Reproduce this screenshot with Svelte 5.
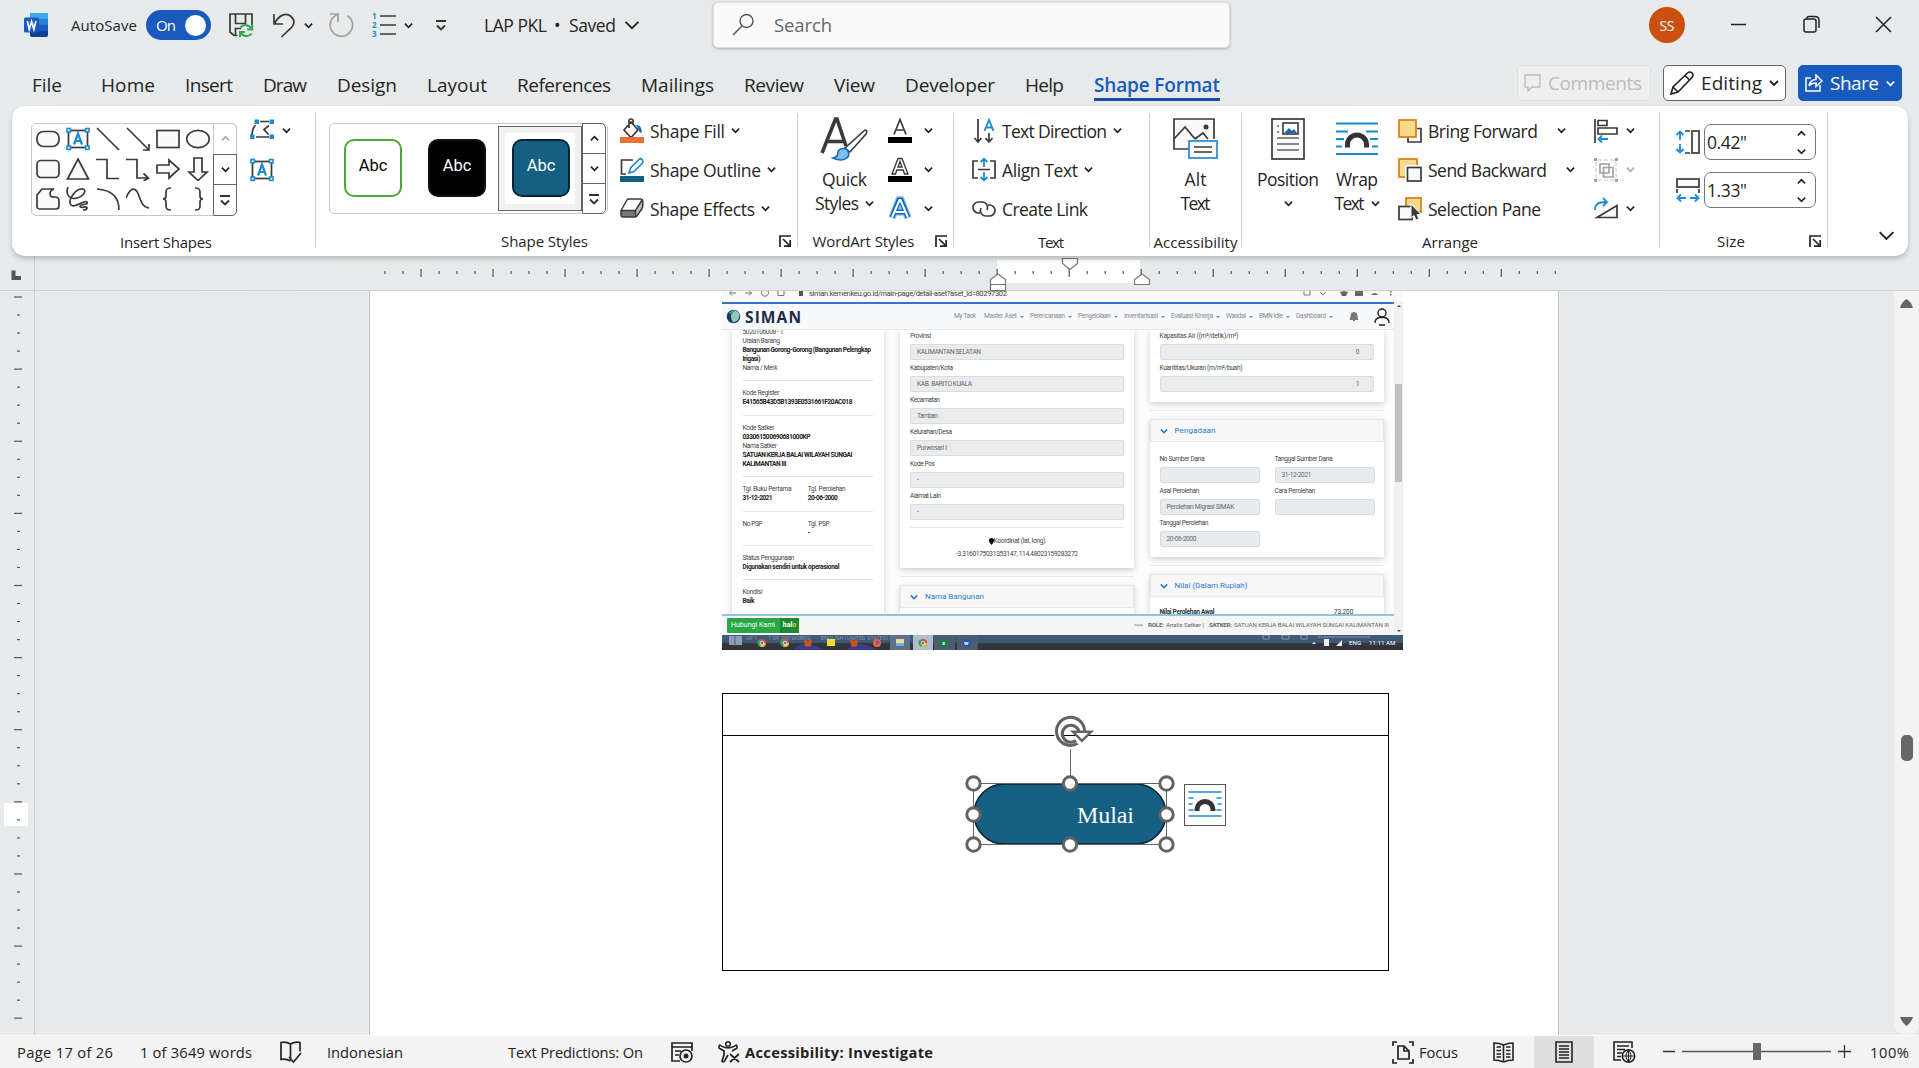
<script>
  // Sets letter spacing so that a label takes exactly its own column width.
  function fit(node, width) {
    const range = document.createRange();
    range.selectNodeContents(node);
    node.style.width = 'max-content';
    const natural = range.getBoundingClientRect().width;
    const gaps = Math.max(1, [...node.textContent].length - 1);
    node.style.letterSpacing = (width - natural) / gaps + 'px';
    node.style.width = width + 'px';
  }

  const D = 'stroke="#3b3a39" stroke-width="1.7" fill="none"';
  const G = 'stroke="#3b3a39" stroke-width="1.7" fill="#fafafa"';
  const B = 'stroke="#1e8bd0" stroke-width="1.8" fill="none"';
  const corner = (x, y) => `<rect x="${x}" y="${y}" width="3.4" height="3.4" fill="#fff" stroke="#1e8bd0" stroke-width="1.6"/>`;
  const boxA = `<rect x="2.5" y="3.5" width="19" height="17" ${D}/><path d="M8 17.500 12 6.500l4 11M9.300 14h5.400" stroke="#1e8bd0" stroke-width="2.200" fill="none"/>` + corner(1, 1.5) + corner(19.6, 1.5) + corner(1, 19) + corner(19.6, 19);

  const shapes = [
    `<rect x="1" y="4.500" width="22" height="15" rx="6.500" ${G}/>`,
    boxA,
    `<path d="M1 1 23 23" ${D}/>`,
    `<path d="M1 1 23 23M23 17v6h-6" ${D}/>`,
    `<rect x="1" y="3.500" width="22" height="17" ${G}/>`,
    `<ellipse cx="12" cy="12" rx="11.300" ry="8.700" ${G}/>`,
    `<rect x="1" y="3.500" width="22" height="17" rx="4" ${G}/>`,
    `<path d="M12 2 22.500 22h-21z" ${G}/>`,
    `<path d="M0 2.500h11v19h12" ${D}/>`,
    `<path d="M0 2.500h11v18.500h11M17.500 16.500l5 4.500-5 3" ${D}/>`,
    `<path d="M1 8h12V3l10 9-10 9v-5H1z" ${G}/>`,
    `<path d="M8 1h8v14h5l-9 8.500L3 15h5z" ${G}/>`,
    `<path d="M6 2h12c-3 1-4 3-4 5 0 3 2 3 5 3q4 0 4 4v5q0 3-3 3H4q-3 0-3-3V8z" ${G}/>`,
    `<path d="M2 0C-1 8 4 13 11 11S21 3 17 2C10 1 1 13 5 18c4 4 14-6 16-3 2 3-7 2-7 4.500C15 22 21 18 21 21q0 2-4 2" ${D}/>`,
    `<path d="M1 2c14 1 22 8 22 21" ${D}/>`,
    `<path d="M0 11C5-1 10 0 13 9s5 11 10 12" ${D}/>`,
    `<path d="M15 1c-4 0-5 1-5 4v4q0 3-3 3 3 0 3 3v4c0 3 1 4 5 4" ${D}/>`,
    `<path d="M9 1c4 0 5 1 5 4v4q0 3 3 3-3 0-3 3v4c0 3-1 4-5 4" ${D}/>`
  ];

  const icons = {
    word: '<rect x="6" width="18" height="24" rx="2" fill="#103f91"/><path d="M6 2q0-2 2-2h14q2 0 2 2v4H6z" fill="#41a5ee"/><path d="M6 6h18v6H6z" fill="#2b7cd3"/><path d="M6 12h18v6H6z" fill="#185abd"/><rect y="4.500" width="15" height="15" rx="1.500" fill="#185abd"/><path d="m3.300 8 2 8.200L7.600 8.500l2.300 7.700 2-8.200" fill="none" stroke="#fff" stroke-width="1.700"/>',
    save: `<path d="M8.500 22.500H5L1 19V1h22v11M6.500 1v9.500h10V1M6.500 22.500v-7H12" ${D}/><path d="M23.200 11.500v5h-5M11 24v-5h5M22.500 16a6.500 6.500 0 0 0-11-1.500M11.700 19.500a6.500 6.500 0 0 0 11 1" stroke="#2fa84f" stroke-width="2" fill="none"/>`,
    undo: `<path d="M2 1v10h9M2.500 10.500C7 2 14-1 19 3.500s3 9-1 12.500L9.500 24" ${D}/>`,
    redo: '<path d="M1 1.500h8v8M8.700 2a11.200 11.200 0 1 0 9.500 1" transform="translate(0 -.5)" stroke="#a2a2a2" stroke-width="1.700" fill="none"/>',
    list: `<path d="M8 3h16M8 12h16M8 21h16" ${D}/><g font-size="8" font-weight="700" fill="#1e8bd0"><text y="6">1</text><text y="15">2</text><text y="24">3</text></g>`,
    more: '<path d="M1 2h10" stroke="#333" stroke-width="2"/><path d="m2 6.500 4 4 4-4" stroke="#333" stroke-width="1.900" fill="none"/>',
    search: '<circle cx="14.500" cy="8" r="6.500" fill="none" stroke="#555" stroke-width="1.400"/><path d="m10 13-9 9" stroke="#555" stroke-width="1.400"/>',
    comment: '<path d="M1 2h15v12H8l-4 4v-4H1z" fill="none" stroke="#bdbdbd" stroke-width="1.400"/>',
    pencil: '<path d="M1 23l2-7L17.500 2q2.500-2 4.500 0t0 4.500L8 21zM15 4.500l4.500 4.500M3 16l5 5" fill="none" stroke="#222" stroke-width="1.600"/>',
    share: '<path d="M6 5H1v13h14v-6M4 13C5 8 8 6.500 11 6.500V2l6 6-6 5.500V10C8 10 6 10.500 4 13z" fill="none" stroke="#fff" stroke-width="1.500"/>',
    editShape: `<path d="M5.500 6Q2 10 2 16M10 2.500h9M19 6.500l-5 4 4.500 5M6 18h13" ${D}/><path d="M4.500.500H9V5H4.500zM19.500.500H24V5h-4.500zM0 15.500h4.500V20H0zM19.500 15.500H24V20h-4.500z" fill="#1e8bd0"/>`,
    boxA,
    fill: `<path d="M4 11 11 3l7 8-6 6.500q-1 .5-2 0zM9 9V2q0-2 2-2t2 2v3" ${G}/><path d="M16 6q5-1 6 7-3 2-3-2z" fill="#0f6cbd"/><rect y="18" width="24" height="6" fill="#eb7031"/>`,
    outline: `<path d="M13 2H1.500v14H6" ${D}/><path d="m9 15 1.500-5L19 1.500q1.500-1.500 3 0t.5 3.500L14 13.500z" fill="#fff" stroke="#1e8bd0" stroke-width="1.700"/><rect y="18" width="24" height="6" fill="#156082"/>`,
    effects: '<path d="M1 13.500h14.500l-1 6.500H3q-2 0-2-2z" fill="#777"/><path d="m15.500 13.500 6.500-11 1 8-6.500 9.500h-2z" fill="#bbb"/><path d="M1 13.500 7 3q.6-1 2-1h11q2 0 2 1l-6.500 10.500z" fill="#fff"/><path d="M1 13.500 7 3q.6-1 2-1h11.500q2 0 2.300 2v5q0 1-.8 2.500L17 19q-1 1-2 1H3q-2 0-2-2zh14.500L22 3M15.500 13.500V20" fill="none" stroke="#3b3a39" stroke-width="1.500"/>',
    quick: '<path d="M1 36 14.500 2h1.500l9 27M6 24.500h17" fill="none" stroke="#3b3a39" stroke-width="3.600"/><path d="M44 13q3 0 1 4L29 35l-5-4z" fill="#fff" stroke="#3b3a39" stroke-width="1.600"/><path d="M12 41q5-1 5-6c1-4 8-5 10-1 3 6-4 12-15 7z" fill="#83bdf0" stroke="#0f6cbd" stroke-width="1.600"/>',
    textFill: `<path d="m6 15.500 6-15 6 15M8 11h8" ${D}/><rect y="18" width="24" height="6"/>`,
    textOutline: '<path d="m4 16 6-15.500h4L20 16h-3.500l-1.300-4H8.800l-1.300 4zM10 9h4l-2-5.500z" fill="#fff" stroke="#3b3a39" stroke-width="1.400"/><rect y="18" width="24" height="6"/>',
    textEffect: '<path d="M4 21 11 3h2l7 18M7.500 15h9" fill="none" stroke="#90c5f2" stroke-width="7.500"/><path d="M4 20.500 11 3h2l7 17.500M7.500 15h9" fill="none" stroke="#0f6cbd" stroke-width="5"/><path d="M4 20.500 11.500 3h1L20 20.500M7.500 15h9" fill="none" stroke="#fff" stroke-width="2"/>',
    textDir: `<path d="M6 0v22M2.500 19 6 23l3.500-4M17 14v9M13.500 19l3.500 4 3.500-4" ${D}/><path d="m12.500 12 4.500-11 4.500 11M14 8.500h6" ${B}/>`,
    alignText: `<path d="M6 3H1v17h5M18 3h5v17h-5M6 11.500h12" ${D}/><path d="M12 9V1M8.500 4 12 .8 15.500 4M12 14v8M8.500 19l3.500 3.300 3.500-3.300" ${B}/>`,
    link: `<path d="M8 16H6.500a5.500 5.500 0 1 1 0-11H10a5.500 5.500 0 0 1 5 8M16 8h1.500a5.500 5.500 0 1 1 0 11H14a5.500 5.500 0 0 1-5-8" ${D}/>`,
    alt: `<path d="M22 31H1V1h40v20" ${G}/><path d="m1 21 11-12 10 12M22 21l8-6 5 6" ${D}/><circle cx="33" cy="9" r="2.500" fill="#3b3a39"/><rect x="16" y="23" width="28" height="17" fill="#fafafa" stroke="#1e8bd0" stroke-width="1.700"/><path d="M21 29h18M21 34h18" ${D}/>`,
    position: `<rect x="1" y="1" width="32" height="40" ${G}/><path d="M6 8h2M6 14h2M6 20h22M6 26h22M6 32h22" stroke="#666" stroke-width="1.700"/><rect x="12" y="5" width="15" height="11" fill="#fff" stroke="#3b3a39" stroke-width="1.600"/><path d="m13 15 5-5 3 3 2-2 3 4z" fill="#0f6cbd"/>`,
    wrap: `<path d="M0 1h42M0 9h12M30 9h12M0 16.500h8M34 16.500h8M0 24h6M36 24h6M0 31.500h42" ${B}/><path d="M11.500 25v-3a9.500 9.500 0 0 1 19 0v3" fill="none" stroke="#333" stroke-width="5"/>`,
    forward: `<path d="M19 9.500h4V23H10v-4" ${D}/><rect x="1" y="1" width="17" height="17" fill="#f8da8d" stroke="#e07a10" stroke-width="1.700"/>`,
    backward: `<rect x="1" y="1" width="18" height="18" fill="#f8da8d" stroke="#e07a10" stroke-width="1.700"/><rect x="7" y="7" width="17" height="17" fill="#fff"/><rect x="9.500" y="9.500" width="13.500" height="13.500" ${G}/>`,
    pane: `<rect x="8" y="1" width="15" height="14" fill="#f8da8d" stroke="#e07a10" stroke-width="1.700"/><rect x="1" y="9.500" width="13" height="13" ${G}/><path d="M13 7v14l3-2.500 2 4.500 3-1-2-4.500h4z" fill="#3b3a39" stroke="#fff"/>`,
    align: `<path d="M1 0v24M4 1.500h9v5H4zM4 9h19v6H4z" ${D}/><path d="M14 20H4.500M8 16.500 4.500 20 8 23.500" ${B}/>`,
    group: '<path d="M4 2h16M4 22h16M2 4v16M22 4v16" stroke="#c2c2c2" stroke-dasharray="4 2"/><path d="M0 0h3v3H0zM21 0h3v3h-3zM0 21h3v3H0zM21 21h3v3h-3z" fill="#a2a2a2"/><path d="M6 6h9v9H6zM9.500 9.500H19V19H9.500z" stroke="#a2a2a2" stroke-width="1.700" fill="none"/>',
    rotate: `<path d="M3 20.500h20v-12z" ${G}/><path d="M1 13C1 7 4 5 12 5M9 1l4 4-4 4" ${B}/>`,
    height: `<path d="M9 1h5M9 23h5" ${D}/><rect x="16" y="1" width="7" height="22" ${G}/><path d="M4 10V1.500M.5 5 4 1.500 7.500 5M4 14v8.500M.5 19 4 22.500 7.500 19" ${B}/>`,
    width: `<rect x="1" y="1" width="22" height="8" ${G}/><path d="M1 11v4M23 11v4" ${D}/><path d="M10 20H1.500M5 16.500 1.500 20 5 23.500M14 20h8.500M19 16.500l3.500 3.500-3.500 3.500" ${B}/>`,
    launcher: '<path d="M1 12V1h11M4 4l6 6M11.200 5v6.200H5" stroke="#222" stroke-width="1.700" fill="none"/>',
    book: '<path d="M10.500 3v15M10.500 3Q6 .5 1 1.500v17q5-1 9.500 1.500M10.500 3Q15 .5 20 1.500v9M9 16l4.500 5L21 12" fill="none" stroke="#222" stroke-width="1.700"/>',
    macro: '<path d="M21 9V1H1v18h8M1 5h20M4 9h6M4 13h4" fill="none" stroke="#222" stroke-width="1.700"/><circle cx="15" cy="14" r="6" fill="#f3f3f3" stroke="#222" stroke-width="1.700"/><circle cx="15" cy="14" r="2.500" fill="#222"/>',
    access: '<circle cx="10" cy="3" r="2.300" fill="none" stroke="#222" stroke-width="1.500"/><path d="M10 7Q4 6 2.500 4.500T1 7l5 3v4l-2 6q1 2 2.500 0L10 14M10 7q6-1 7.500-2.500T19 7l-5 3M12 13l9 8M21 13l-9 8" fill="none" stroke="#222" stroke-width="1.700"/>',
    focus: '<path d="M5 1H1v4M17 1h4v4M5 22H1v-4M17 22h4v-4M6 5h6l5 5v8H6zM12 5v5h5" fill="none" stroke="#222" stroke-width="1.700"/>',
    read: '<path d="M10.500 3v16M10.500 3Q6 1 1 1v17q5 0 9.500 2M10.500 3Q15 1 20 1v17q-5 0-9.500 2M3.500 5H8M3.500 8.500H8M3.500 12H8M3.500 15H8M13 5h4.500M13 8.500h4.500M13 12h4.500M13 15h4.500" fill="none" stroke="#222" stroke-width="1.600"/>',
    print: '<path d="M1 1h16v20H1zM4 5h10M4 8h10M4 11h10M4 14h10M4 17h10" fill="none" stroke="#222" stroke-width="1.600"/>',
    web: '<path d="M19 7V1H1v18h7M4 5h12M4 8.500h8M4 12h5M4 15.500h4" fill="none" stroke="#222" stroke-width="1.600"/><circle cx="15.500" cy="15" r="6.200" fill="#f3f3f3" stroke="#222" stroke-width="1.500"/><path d="M9.500 15h12M15.500 9v12M15.500 9q-5 6 0 12M15.500 9q5 6 0 12" fill="none" stroke="#222"/>',
    bell: '<path d="M1 8.500Q2 7 2 4.500a3 3 0 0 1 6 0Q8 7 9 8.500zM4 9.500h2" fill="#777" stroke="#777"/>',
    user: '<circle cx="8" cy="5" r="4" fill="none" stroke="#222" stroke-width="1.400"/><path d="M1 15q0-5 5-5.500h4q5 .5 5 5.500M5 17h6" fill="none" stroke="#222" stroke-width="1.400"/>'
  };

  const tabs = [['File', 30], ['Home', 54], ['Insert', 48], ['Draw', 44], ['Design', 60], ['Layout', 60], ['References', 94], ['Mailings', 73], ['Review', 60], ['View', 41], ['Developer', 90], ['Help', 39], ['Shape Format', 126]];
  const hTicks = Array.from({ length: 66 }, (_, i) => ({ x: 385 + 18.005 * i, major: i % 4 === 2 }));
  const vTicks = Array.from({ length: 41 }, (_, i) => ({ y: 6 + 18.03 * i, major: i % 4 === 0 }));

  const asset = [
    [['5020106008 - 1', 41], ['Uraian Barang', 37.5], ['Bangunan Gorong-Gorong (Bangunan Pelengkap', 128.5, 1], ['Irigasi)', 18, 1], ['Nama / Merk', 35]],
    [['Kode Register', 37], ['E41565B43D5B1393E0531661F20AC018', 110, 1]],
    [['Kode Satker', 32], ['033061500690681000KP', 68, 1], ['Nama Satker', 34.5], ['SATUAN KERJA BALAI WILAYAH SUNGAI', 110, 1], ['KALIMANTAN III', 44, 1]]
  ];
  const pairs = [
    [['Tgl. Buku Pertama', 49, '31-12-2021', 30], ['Tgl. Perolehan', 38, '20-06-2000', 30]],
    [['No PSP', 20, '', 0], ['Tgl. PSP', 22, '-', 2]]
  ];
  const places = [['Provinsi', 21, 'KALIMANTAN SELATAN', 64], ['Kabupaten/Kota', 43, 'KAB. BARITO KUALA', 55], ['Kecamatan', 30, 'Tamban', 21], ['Kelurahan/Desa', 42, 'Purwosari I', 30], ['Kode Pos', 25, '-', 2], ['Alamat Lain', 31, '-', 2]];
  const menus = [['My Task', 22], ['Master Aset', 33], ['Perencanaan', 35], ['Pengelolaan', 33], ['Inventarisasi', 34], ['Evaluasi Kinerja', 42], ['Wasdal', 20], ['BMN Idle', 24], ['Dashboard', 30]];
  const handles = [[0, 0], [96.5, 0], [193, 0], [0, 31], [193, 31], [0, 61], [96.5, 61], [193, 61]];
</script>

{#snippet t(text, w)}<span class="fit" use:fit={w}>{text}</span>{/snippet}
{#snippet ic(name, w, h)}<svg class="ic" width={w} height={h} viewBox="0 0 {w} {h}">{@html icons[name]}</svg>{/snippet}
{#snippet chev(w = 9, up = false, color = '#222')}<svg class="ic" width={w} height={w} viewBox="0 0 10 10"><path d={up ? 'm1 7 4-4 4 4' : 'm1 3 4 4 4-4'} fill="none" stroke={color} stroke-width={w > 12 ? 1.1 : 1.9} /></svg>{/snippet}
{#snippet cmd(name, label, w, arrow = true)}
  <div class="cmd">{@render ic(name, 24, 24)}{@render t(label, w)}{#if arrow}{@render chev()}{/if}</div>
{/snippet}
{#snippet field(label, w, value, vw)}
  <div class="field"><div class="lab">{@render t(label, w)}</div><div class="inp">{#if value}{@render t(value, vw)}{/if}</div></div>
{/snippet}

<div class="app">
  <header class="title">
    {@render ic('word', 24, 24)}
    <div class="autosave">{@render t('AutoSave', 66)}</div>
    <div class="toggle">{@render t('On', 20)}<i></i></div>
    <div class="m18">{@render ic('save', 25, 25)}</div>
    <div class="m18">{@render ic('undo', 24, 25)}</div>
    <div class="m8">{@render chev()}</div>
    <div class="m15">{@render ic('redo', 25, 25)}</div>
    <div class="m18">{@render ic('list', 24, 25)}</div>
    <div class="m8">{@render chev()}</div>
    <div class="m22">{@render ic('more', 12, 12)}</div>
    <div class="docname">{@render t('LAP PKL', 63)}{@render t('•', 8)}{@render t('Saved', 47)}</div>
    <div class="m8">{@render chev(16)}</div>
    <div class="search">{@render ic('search', 22, 23)}{@render t('Search', 58)}</div>
    <div class="avatar">{@render t('SS', 15)}</div>
    <svg class="win" width="162" height="20" viewBox="0 0 162 20"><path d="M0 9.500h15M145 2l15 15M160 2l-15 15" stroke="#222" stroke-width="1.500" /><path d="M73 6q0-2 2-2h8q2 0 2 2v9q0 2-2 2h-8q-2 0-2-2zM76 3.500q0-2 2-2h6q4 0 4 4V13" fill="none" stroke="#222" stroke-width="1.500" /></svg>
  </header>

  <nav class="tabs">
    {#each tabs as [label, w], i}
      <div class="tab" class:first={i === 0} class:active={i === 12}>{@render t(label, w)}</div>
    {/each}
    <div class="actions">
      <div class="btn comments">{@render ic('comment', 17, 20)}{@render t('Comments', 94)}</div>
      <div class="btn editing">{@render ic('pencil', 24, 24)}{@render t('Editing', 61)}{@render chev(10)}</div>
      <div class="btn share">{@render ic('share', 18, 20)}{@render t('Share', 49)}{@render chev(9, false, '#fff')}</div>
    </div>
  </nav>

  <section class="ribbon">
    <div class="group g1">
      <div class="body">
        <div class="gallery shapes">
          <div class="shapegrid">{#each shapes as s}<svg width="24" height="24" viewBox="0 0 24 24">{@html s}</svg>{/each}</div>
          <div class="spin"><b class="off">{@render chev(9, true, '#aaa')}</b><b>{@render chev()}</b><b>{@render ic('more', 12, 12)}</b></div>
        </div>
        <div class="col editcol">
          <div class="cmd">{@render ic('editShape', 24, 24)}{@render chev()}</div>
          <div class="cmd">{@render ic('boxA', 24, 24)}</div>
        </div>
      </div>
      <div class="glabel">{@render t('Insert Shapes', 92)}</div>
    </div>
    <div class="sep"></div>
    <div class="group g2">
      <div class="body">
        <div class="gallery styles">
          <div class="cell"><div class="abc green">Abc</div></div>
          <div class="cell"><div class="abc black">Abc</div></div>
          <div class="cell sel"><div class="abc teal">Abc</div></div>
          <div class="spin"><b>{@render chev(9, true)}</b><b>{@render chev()}</b><b>{@render ic('more', 12, 12)}</b></div>
        </div>
        <div class="col fillcol">
          {@render cmd('fill', 'Shape Fill', 75)}
          {@render cmd('outline', 'Shape Outline', 111)}
          {@render cmd('effects', 'Shape Effects', 105)}
        </div>
      </div>
      <div class="glabel">{@render t('Shape Styles', 87)}<span class="launch">{@render ic('launcher', 13, 13)}</span></div>
    </div>
    <div class="sep"></div>
    <div class="group g3">
      <div class="body">
        <div class="big quick">{@render ic('quick', 47, 44)}<div>{@render t('Quick', 45)}</div><div>{@render t('Styles', 44)}{@render chev()}</div></div>
        <div class="col acol">
          {#each ['textFill', 'textOutline', 'textEffect'] as n}<div class="cmd">{@render ic(n, 24, 24)}{@render chev()}</div>{/each}
        </div>
      </div>
      <div class="glabel">{@render t('WordArt Styles', 102)}<span class="launch">{@render ic('launcher', 13, 13)}</span></div>
    </div>
    <div class="sep"></div>
    <div class="group g4">
      <div class="body">
        <div class="col">
          {@render cmd('textDir', 'Text Direction', 105)}
          {@render cmd('alignText', 'Align Text', 76)}
          {@render cmd('link', 'Create Link', 86, false)}
        </div>
      </div>
      <div class="glabel low">{@render t('Text', 26)}</div>
    </div>
    <div class="sep"></div>
    <div class="group g5">
      <div class="body"><div class="big alt">{@render ic('alt', 45, 42)}<div>{@render t('Alt', 22)}</div><div>{@render t('Text', 30)}</div></div></div>
      <div class="glabel low">{@render t('Accessibility', 84)}</div>
    </div>
    <div class="sep"></div>
    <div class="group g6">
      <div class="body">
        <div class="big pos">{@render ic('position', 34, 42)}<div>{@render t('Position', 62)}</div><div>{@render chev()}</div></div>
        <div class="big wrapb">{@render ic('wrap', 42, 33)}<div>{@render t('Wrap', 42)}</div><div>{@render t('Text', 30)}{@render chev()}</div></div>
        <div class="col far">
          {@render cmd('forward', 'Bring Forward', 110)}
          {@render cmd('backward', 'Send Backward', 119)}
          {@render cmd('pane', 'Selection Pane', 113, false)}
        </div>
        <div class="col acol2">
          <div class="cmd">{@render ic('align', 24, 24)}{@render chev()}</div>
          <div class="cmd">{@render ic('group', 24, 24)}{@render chev(9, false, '#aaa')}</div>
          <div class="cmd">{@render ic('rotate', 24, 24)}{@render chev()}</div>
        </div>
      </div>
      <div class="glabel low">{@render t('Arrange', 56)}</div>
    </div>
    <div class="sep"></div>
    <div class="group g7">
      <div class="body sizes">
        {#each [['height', '0.42"'], ['width', '1.33"']] as [n, v]}
          <div class="size">{@render ic(n, 24, 24)}<div class="num">{@render t(v, 40)}<span class="ud">{@render chev(9, true)}{@render chev()}</span></div></div>
        {/each}
      </div>
      <div class="glabel">{@render t('Size', 28)}<span class="launch">{@render ic('launcher', 13, 13)}</span></div>
    </div>
    <div class="sep"></div>
    <div class="collapse">{@render chev(17)}</div>
  </section>

  <div class="hruler">
    <svg width="1919" height="34" viewBox="0 257 1919 34">
      <path d="M11.500 270.500h4v5.500h5.500v4H11.500z" fill="#555" />
      <path d="M34.500 257v34" stroke="#ccd0d2" />
      <rect x="997" y="260" width="143" height="23" fill="#fff" />
      {#each hTicks as k}<path d="M{k.x} {k.major ? 269 : 271}v{k.major ? 8 : 3}" stroke="#555" stroke-width="1.200" />{/each}
      <path d="M1062.500 258.500h15v5l-7.500 6-7.500-6zM990.500 284.500v-5l7.500-5.500 7.500 5.500v5zM990.500 284.500h15v6h-15zM1134.500 284.500v-5l7.500-5.500 7.500 5.500v5z" fill="#fff" stroke="#777" stroke-width="1.200" />
    </svg>
  </div>

  <main class="work">
    <div class="vruler">
      <svg width="34" height="744">
        <rect x="4" y="512" width="24" height="23" fill="#fff" />
        {#each vTicks as k}<path d="M{k.major ? 14 : 17} {k.y}h{k.major ? 8 : 3}" stroke="#555" stroke-width="1.200" />{/each}
      </svg>
    </div>
    <div class="page">
      <div class="shot">
        <div class="chrome">
          <svg width="68" height="11"><g fill="none" stroke="#777"><path d="M14 2H8m2-2.500L7.500 2 10 4.500M23 2h7m-3-2.500L29.500 2 27 4.500M46 0a3.500 3.500 0 1 1-6 0M56 0v4.500h6V0" /></g></svg>
          <i class="lock"></i>{@render t('siman.kemenkeu.go.id/main-page/detail-aset?aset_id=80297302', 198)}
          <svg class="exts" width="100" height="8"><g fill="#666"><path d="m37 1 4-1 4 1-2 4h-4zM52 0h8v5h-8zM68 4q4-4 7 0zM87 0h1.500v1.500H87zM87 3h1.500v1.500H87z" /><path d="M1 0v4h6V0M17 1l3 3 3-3" fill="none" stroke="#777" /></g></svg>
        </div>
        <div class="site">
          <div class="view">
            <div class="nav">
              <svg class="ic" width="15" height="15" viewBox="0 0 15 15"><circle cx="7.500" cy="7.500" r="6.800" fill="#17336b" /><path d="M9 1.500q-7 4-2 12Q14 12 13.500 5 12 2 9 1.500z" fill="#8fc9b0" /><path d="M4 5q4-2 5-4-4 0-6 3z" fill="#3bb27a" /></svg>
              <div class="brand">{@render t('SIMAN', 56)}</div>
              <div class="menus">{#each menus as [m, w], i}<span>{@render t(m, w)}{#if i}<em></em>{/if}</span>{/each}</div>
              {@render ic('bell', 10, 11)}
              <div class="user">{@render ic('user', 16, 18)}</div><em class="blue"></em>
            </div>
            <div class="cols">
              <div class="card left">
                {#each asset as g}<div class="lines">{#each g as [s, w, b]}<div class:bold={b}>{@render t(s, w)}</div>{/each}</div>{/each}
                {#each pairs as p}<div class="lines two">{#each p as [a, w, v, vw]}<div><div>{@render t(a, w)}</div><div class="bold">{#if v}{@render t(v, vw)}{/if}</div></div>{/each}</div>{/each}
                <div class="lines"><div>{@render t('Status Penggunaan', 52)}</div><div class="bold">{@render t('Digunakan sendiri untuk operasional', 97)}</div></div>
                <div class="lines"><div>{@render t('Kondisi', 20)}</div><div class="bold">{@render t('Baik', 12)}</div></div>
              </div>
              <div class="mid">
                <div class="card form tall">
                  {#each places as [label, w, value, vw]}{@render field(label, w, value, vw)}{/each}
                  <div class="coord"><div><svg width="5" height="7"><path d="M2.500 7Q0 4 0 2.500a2.500 2.500 0 0 1 5 0Q5 4 2.500 7z" /></svg>{@render t('Koordinat (lat, long)', 52)}</div><div>{@render t('-3.3160175031353147, 114.48023159283272', 122)}</div></div>
                </div>
                <hr />
                <div class="card low"><div class="head">{@render chev(8, false, '#2a7ad0')}{@render t('Nama Bangunan', 59)}</div></div>
              </div>
              <div class="mid">
                <div class="card form short">
                  <div class="field num2"><div class="lab">{@render t('Kapasitas Air ((m³/detik)/m²)', 79)}</div><div class="inp">0</div></div>
                  <div class="field num2"><div class="lab">{@render t('Kuantitas/Ukuran (m/m²/buah)', 83)}</div><div class="inp">1</div></div>
                </div>
                <hr />
                <div class="card proc"><div class="head">{@render chev(8, false, '#2a7ad0')}{@render t('Pengadaan', 41)}</div>
                  <div class="grid2">
                    {@render field('No Sumber Dana', 45, '', 0)}{@render field('Tanggal Sumber Dana', 58, '31-12-2021', 30)}
                    {@render field('Asal Perolehan', 40, 'Perolehan Migrasi SIMAK', 68)}{@render field('Cara Perolehan', 41, '', 0)}
                    {@render field('Tanggal Perolehan', 49, '20-06-2000', 30)}
                  </div>
                </div>
                <hr />
                <div class="card low"><div class="head">{@render chev(8, false, '#2a7ad0')}{@render t('Nilai (Dalam Rupiah)', 73)}</div>
                  <div class="value"><b>{@render t('Nilai Perolehan Awal', 55)}</b><span>73,200</span></div></div>
              </div>
            </div>
            <div class="foot">
              <div class="call">{@render t('Hubungi Kami', 44)}<span>hal<u>o</u></span></div>
              <div class="role">{@render t('>>>', 9)}<b>{@render t('ROLE:', 16)}</b>{@render t('Analis Satker |', 38)}<b>{@render t('SATKER:', 23)}</b>{@render t('SATUAN KERJA BALAI WILAYAH SUNGAI KALIMANTAN III', 155)}</div>
            </div>
          </div>
          <div class="sbar"><em class="up"></em><i></i><em></em></div>
        </div>
        <div class="taskbar">
          <svg width="681" height="15" viewBox="0 0 681 15">
            <defs><linearGradient id="tb" x2="0" y2="1"><stop offset="0" stop-color="#3f5b7d" /><stop offset=".5" stop-color="#3f5672" /><stop offset=".55" stop-color="#33373f" /><stop offset="1" stop-color="#303136" /></linearGradient></defs>
            <rect width="681" height="15" fill="url(#tb)" />
            <path d="M73 13q10-10 28 2H73zM125 15q10-12 30 0z" fill="#3a3c8e" />
            <path d="M7 1h13v9H7z" fill="#8b9db2" /><path d="M13 1v10" stroke="#4b6078" />
            <g font-size="5.500" fill="#8797ab" font-family="Roboto"><text x="24" y="4.500">OF 1</text><text x="46" y="4.500">1 OF 300 WORDS</text><text x="99" y="4.500">ENGLISH (UNITED STATES)</text></g>
            <path d="M168 0h20v15h-20z" fill="#5d728a" /><path d="M191 0h20v15h-20z" fill="#aebdcc" /><path d="M212 0h21v15h-21zM235 0h21v15h-21z" fill="#4d5d71" />
            {#each [40, 63, 201] as x}<circle cx={x} cy="8" r="4" fill="#e04a36" /><path d="M{x} 8h4a4 4 0 0 1-6 3.500z" fill="#f6c42c" /><path d="M{x} 8l-2 3.500a4 4 0 0 1-1-7z" fill="#35a853" /><circle cx={x} cy="8" r="1.800" fill="#3a7de8" stroke="#fff" stroke-width=".7" />{/each}
            <path d="m82 4 4 2 4-2-1 7-3 1-3-1zM128 4l4 2 4-2-1 7-3 1-3-1z" fill="#c8541b" /><path d="M105 4h8v7h-8z" fill="#f2dc2e" /><circle cx="155" cy="8" r="4" fill="#f36b22" /><circle cx="155.500" cy="7.500" r="2" fill="#7652c8" />
            <path d="M174 4h8v7h-8z" fill="#eedb96" /><path d="M174 8h8v3h-8z" fill="#6eb3dd" /><path d="M218 4h8v8h-8z" fill="#1d7a48" /><path d="M241 4h8v8h-8z" fill="#285aa8" />
            <g font-size="6" fill="#fff" font-weight="700" font-family="Roboto"><text x="220" y="10">x</text><text x="242" y="10">w</text></g>
            <path d="M541 0h6v4h-6zM560 0h7v4h-7zM579 0h6v4h-6zM596 2h52" fill="none" stroke="#8797ab" />
            <path d="m590 9 2-2 2 2zM602 4h5v7h-5zM614 11l6-6v6z" fill="#eee" />
            <g font-size="6.200" fill="#fff" font-family="Roboto"><text x="627" y="10.300">ENG</text><text x="647" y="10.300">11:11 AM</text></g>
          </svg>
        </div>
      </div>

      <div class="table"><div class="trow"></div></div>

      <svg class="shape" width="270" height="145" viewBox="960 710 270 145">
        <rect x="974" y="784" width="192" height="60" rx="30" fill="#156082" stroke="#042433" stroke-width="1.600" />
        <rect x="973.500" y="783.500" width="193" height="61" fill="none" stroke="#666" />
        <path d="M1070.500 745v40" stroke="#666" />
        <text x="1077" y="823" font-size="24" textLength="57" fill="#fff">Mulai</text>
        {#each handles as [x, y]}<circle cx={973.5 + x} cy={783.5 + y} r="6.700" fill="#fff" stroke="#636363" stroke-width="3" />{/each}
        <g fill="none" stroke="#636363">
          <circle cx="1070.500" cy="732.500" r="12.500" stroke="#fff" stroke-width="8" />
          <path d="M1077.500 743.500A14 14 0 1 1 1084.500 731.500" stroke-width="3" />
          <path d="M1076 740.500A8.500 8.500 0 1 1 1079 731.500" stroke-width="3" />
          <path d="M1073 731.800h18l-9 9z" fill="#fff" stroke-width="2.500" />
        </g>
        <rect x="1184.500" y="784.500" width="41" height="41" fill="#fff" stroke="#555" />
        <path d="M1188.500 792h33M1188.500 798h5M1216.500 798h5M1188.500 804h4M1217.500 804h4M1188.500 810h5M1216.500 810h5M1188.500 816h33" stroke="#1e8bd0" stroke-width="1.700" />
        <path d="M1197 811v-1.500a8 8 0 0 1 16 0v1.500" fill="none" stroke="#333" stroke-width="5" />
      </svg>
    </div>
    <div class="vscroll"><svg width="25" height="744"><path d="M6 17q1.500-6 6.500-9 5 3 6.500 9zM6 726h13q-1.500 5-6.500 9-5-4-6.500-9z" fill="#666" /><rect x="7" y="444" width="12" height="26" rx="5" fill="#666" /></svg></div>
  </main>

  <footer class="status">
    <div class="s1">{@render t('Page 17 of 26', 96)}</div>
    <div class="s2">{@render t('1 of 3649 words', 112)}</div>
    <div class="s3">{@render ic('book', 22, 22)}</div>
    <div class="s4">{@render t('Indonesian', 76)}</div>
    <div class="s5">{@render t('Text Predictions: On', 135)}</div>
    <div class="s6">{@render ic('macro', 22, 21)}</div>
    <div class="s7">{@render ic('access', 22, 22)}</div>
    <strong>{@render t('Accessibility: Investigate', 188)}</strong>
    <div class="right">
      {@render ic('focus', 22, 23)}<div class="v0">{@render t('Focus', 39)}</div>
      <div class="v1">{@render ic('read', 21, 21)}</div>
      <div class="v2">{@render ic('print', 18, 22)}</div>
      <div class="v3">{@render ic('web', 22, 22)}</div>
      <svg width="190" height="20"><path d="M1 9.500h12M176 9.500h13M182.500 3v13" stroke="#333" stroke-width="1.300" /><path d="M20 9.500h149" stroke="#555" stroke-width="1.600" /><rect x="91" y="1" width="8" height="17" fill="#666" /></svg>
      <div class="zoom">{@render t('100%', 39)}</div>
    </div>
  </footer>
</div>

<style>
  :global(body) { margin: 0; overflow: hidden; }
  .app, .app :global(*) { box-sizing: border-box; }
  .app { width: 1919px; height: 1068px; display: flex; flex-direction: column; background: linear-gradient(100deg, #e6ebed 0%, #e8eaeb 15%, #e6eaea 50%, #e8ebec 70%, #e6eaec 100%); font-family: "Open Sans", "Noto Sans", sans-serif; color: #252525; font-size: 18px; }
  .fit { display: block; white-space: nowrap; flex: none; }
  .ic { display: block; flex: none; overflow: visible; }
  i, em { display: block; flex: none; }
  .title { height: 50px; display: flex; align-items: center; padding-left: 24px; flex: none; font-size: 17.500px; }
  .autosave { margin-left: 23px; font-size: 15px; }
  .toggle { margin-left: 9px; width: 65px; height: 30px; border-radius: 15px; background: #185abd; color: #fff; display: flex; align-items: center; justify-content: space-between; padding: 0 5px 0 10px; font-size: 15px; }
  .toggle i { width: 21px; height: 21px; border-radius: 50%; background: #fff; }
  .m18 { margin-left: 18px; } .m8 { margin-left: 8px; } .m15 { margin-left: 16px; } .m22 { margin-left: 22px; }
  .docname { margin-left: 37px; display: flex; justify-content: space-between; width: 132px; }
  .search { margin: -1px 0 0 73px; width: 517px; height: 46px; background: #fafafa; border-radius: 5px; border: 1px solid #dcdcdc; box-shadow: 0 1px 3px #0004; display: flex; align-items: center; gap: 20px; padding-left: 18px; color: #666; font-size: 18.500px; }
  .avatar { margin-left: 419px; width: 36px; height: 36px; border-radius: 50%; background: #ca5010; color: #fff; font-size: 14px; display: flex; align-items: center; justify-content: center; }
  .win { margin-left: 46px; }
  .tabs { height: 56px; flex: none; display: flex; gap: 30px; padding: 14px 17px 0 32px; font-size: 19px; }
  .tab { height: 37px; padding-top: 8px; line-height: 26px; }
  .tab.first { margin-right: 9px; }
  .active { color: #185abd; font-weight: 600; border-bottom: 3px solid #1549a8; border-radius: 1px; }
  .actions { margin-left: auto; display: flex; gap: 12px; }
  .btn { height: 36px; margin-top: 1px; border-radius: 5px; border: 1px solid #666; display: flex; align-items: center; background: #fff; font-size: 19px; gap: 7px; padding-left: 6px; line-height: 26px; }
  .comments { width: 134px; border-color: #dfdfdf; background: #efefef; color: #bdbdbd; }
  .editing { width: 123px; } .share { width: 104px; background: #185abd; border-color: #185abd; color: #fff; }
  .ribbon { margin: 0 11px 0 12px; height: 150px; flex: none; background: #fff; border-radius: 13px; display: flex; box-shadow: 0 3px 5px #0003; position: relative; font-size: 17.500px; }
  .group { display: flex; flex-direction: column; flex: none; }
  .sep { width: 1px; flex: none; background: #cfcfcf; margin: 7px 0 9px; }
  .body { height: 120px; padding-top: 5px; display: flex; }
  .g1 { width: 303px; padding-left: 19px; } .g2 { width: 481px; padding-left: 13px; } .g3 { width: 155px; } .g4 { width: 195px; padding-left: 18px; } .g5 { width: 91px; } .g6 { width: 417px; } .g7 { width: 167px; }
  .glabel { height: 30px; display: flex; justify-content: center; align-items: center; font-size: 15px; position: relative; }
  .glabel.low { padding-top: 1px; }
  .g1 .glabel { padding-right: 14px; padding-top: 1px; } .g2 .glabel { padding-right: 37px; } .g3 .glabel { padding-right: 24px; } .g6 .glabel { padding-right: 1px; } .g7 .glabel { padding-right: 25px; } .g4 .glabel { padding-right: 19px; }
  .launch { position: absolute; right: 5px; top: 9px; }
  .cmd { height: 39px; display: flex; align-items: center; gap: 6px; }
  .gallery { border: 1px solid #c8c8c8; border-radius: 5px; display: flex; margin-top: 12px; }
  .shapes { width: 206px; height: 93px; }
  .shapegrid { width: 182px; flex: none; display: grid; grid-template-columns: repeat(6, 24px); grid-auto-rows: 24px; gap: 6px; padding: 3px 0 0 4px; }
  .spin { width: 24px; margin: -1px; display: flex; flex-direction: column; }
  .spin b { flex: 1; border: 1px solid #666; display: flex; align-items: center; justify-content: center; margin-bottom: -1px; }
  .spin b:first-child { border-radius: 0 5px 0 0; } .spin b:last-child { border-radius: 0 0 5px 0; margin: 0; }
  .spin .off { border-color: #c8c8c8; }
  .editcol { margin-left: 13px; }
  .editcol .cmd { gap: 8px; }
  .styles { width: 279px; height: 91px; }
  .cell { width: 84px; padding: 13px 13px 0 12px; flex: none; }
  .cell.sel { margin: 2px 1px 0 0; height: 85px; border: 1px solid #666; padding: 10px 11px; outline: 6px solid #f1f1f1; outline-offset: -7px; }
  .abc { width: 58px; height: 58px; margin: 2px 0 0 2px; border-radius: 10px; border: 2px solid; text-align: center; font: 16.500px/49px Roboto, sans-serif; }
  .green { border-color: #4ea72e; color: #000; } .black { border-color: #111; background: #000; color: #fff; } .teal { border-color: #042433; background: #156082; color: #fff; }
  .fillcol { margin-left: 12px; }
  .big { display: flex; flex-direction: column; align-items: center; }
  .big div { height: 24px; display: flex; align-items: center; gap: 6px; }
  .big > :global(svg) { height: 56px; }
  .quick { width: 67px; margin-left: 13px; }
  .acol { margin-left: 10px; } .acol .cmd { gap: 12px; }
  .alt { width: 91px; }
  .pos { width: 62px; margin-left: 15px; } .wrapb { width: 46px; margin-left: 15px; }
  .far { width: 181px; margin-left: 18px; }
  .far .cmd > :global(:nth-child(3)) { margin-left: 13px; }
  .acol2 { margin-left: 15px; } .acol2 .cmd { gap: 8px; }
  .sizes { flex-direction: column; padding: 18px 0 0 16px; gap: 12px; }
  .size { display: flex; align-items: center; gap: 4px; }
  .num { width: 112px; height: 36px; border: 1px solid #767676; border-radius: 7px; display: flex; align-items: center; justify-content: space-between; padding: 0 9px 0 2px; }
  .ud { display: flex; flex-direction: column; gap: 9px; }
  .collapse { margin: 121px 0 0 50px; }
  .hruler { height: 35px; flex: none; padding-top: 1px; border-bottom: 1px solid #cfd2d3; }
  .hruler svg { display: block; }
  .work { height: 744px; flex: none; display: flex; }
  .vruler { width: 35px; border-right: 1px solid #ccd0d2; }
  .page { margin-left: 334px; width: 1190px; background: #fff; border: solid #c6c6c6; border-width: 0 1px; position: relative; padding-left: 352px; overflow: hidden; }
  .vscroll { margin-left: auto; width: 25px; background: #f3f3f3; border-radius: 0 0 12px 12px; }
  .table { width: 667px; height: 278px; border: 1px solid #000; margin-top: 43px; }
  .trow { height: 42px; border-bottom: 1px solid #000; }
  .shape { position: absolute; left: 590px; top: 419px; font-family: "Liberation Serif", serif; }
  .shot { width: 681px; height: 359px; font: 6.600px/9px Roboto, sans-serif; color: #444; }
  .chrome { height: 11px; display: flex; align-items: flex-start; font-size: 7.600px; line-height: 5px; overflow: hidden; background: #fafafa; }
  .chrome > svg { flex: none; }
  .lock { width: 4px; height: 5px; background: #555; margin: 0 6px 0 9px; }
  .exts { margin-left: auto; }
  .site { height: 333px; display: flex; }
  .view { width: 672px; border-top: 2px solid #3a70d0; display: flex; flex-direction: column; }
  .nav { height: 26px; flex: none; background: #f8f9fb; display: flex; align-items: center; padding-left: 4px; border-bottom: 1px solid #e4e6e8; color: #888; box-shadow: 0 1px 2px #0001; }
  .brand { margin-left: 4px; width: 56px; flex: none; font: 700 15.500px/16px "Open Sans", sans-serif; color: #1d2a4a; }
  .menus { width: 395px; margin-left: 153px; flex: none; display: flex; }
  .menus span { display: flex; align-items: center; } .menus > span { margin-right: 8px; }
  em { width: 0; height: 0; border: 2px solid transparent; border-top: 2.500px solid #888; border-bottom: 0; margin-left: 3px; }
  .menus em { margin-right: -2px; }
  .user { margin: 0 0 0 15px; } em.blue { border-top-color: #2a8ad8; margin-left: 6px; }
  .cols { height: 284px; overflow: hidden; background: #fdfdfd; display: flex; padding-left: 10px; }
  .card { background: #fff; box-shadow: 0 2px 6px #0003; border-radius: 1px; }
  .left { width: 152px; padding: 0 11px 0 10.500px; margin-top: -2px; height: 300px; flex: none; }
  .lines { padding-bottom: 7.400px; margin-bottom: 8px; border-bottom: 1px solid #e4e4e4; }
  .lines > div { height: 9px; }
  .bold { color: #222; font-weight: 700; }
  .lines.two { display: flex; height: 26.400px; } .two > div { width: 73px; height: 18px; } .two > div > div { height: 9px; }
  .mid { width: 234px; margin-left: 16px; flex: none; }
  .mid + .mid { margin-left: 15.500px; }
  .form { padding: 0 10px; } .tall { height: 238px; } .short { height: 72px; }
  .low { min-height: 60px; }
  .glabel.low { min-height: 0; }
  .field { height: 32px; } .lab { height: 14px; padding-top: 2px; }
  .inp { height: 16px; background: #e9ecef; border: 1px solid #d9dde0; border-radius: 2px; padding: 3px 6px; color: #666; }
  .num2 .inp { text-align: right; padding-right: 13px; }
  .coord { border-top: 1px solid #e6e6e6; margin-top: 5px; padding-top: 7px; } .coord > div { height: 13px; display: flex; justify-content: center; align-items: center; }
  hr { border: 0; border-top: 1px solid #e8e8e8; height: 1px; margin: 8px 0; }
  .head { height: 23px; background: #f7f7f7; border: 1px solid #e6e6e6; display: flex; align-items: center; gap: 7px; padding-left: 9px; color: #2a7ad0; font-size: 8px; }
  .proc { height: 138px; }
  .grid2 { display: grid; grid-template-columns: 100px 100px; column-gap: 15px; padding: 11px 10px 0; }
  .value { display: flex; justify-content: space-between; padding: 8px 30px 0 10px; color: #333; } .value span { padding-top: 3px; }
  .foot { height: 21px; border-top: 2px solid #8cc4e6; background: #f5f5f5; display: flex; align-items: center; padding: 0 5px; font-size: 6.200px; color: #666; }
  .call { width: 72px; height: 15px; background: #28a745; color: #fff; display: flex; align-items: center; padding-left: 4px; font-size: 7px; border-radius: 1px; }
  .call > span:last-child { margin-left: 5px; background: #1d8a32; width: 19px; line-height: 15px; text-align: center; font-weight: 700; font-size: 7px; } u { color: #e0d52c; text-decoration: none; }
  .role { margin-left: auto; display: flex; gap: 2px; } .role b { margin-left: 3px; }
  .sbar { width: 9px; background: #f1f1f1; display: flex; flex-direction: column; align-items: center; justify-content: space-between; padding: 3px 0; }
  .sbar em { margin: 0; border-top-color: #444; } .sbar em.up { border-top: 0; border-bottom: 2.500px solid #444; }
  .sbar i { width: 7px; height: 98px; background: #c1c1c1; margin: -71px 0 0; }
  .taskbar svg { display: block; }
  .status { flex: 1; background: #f3f3f3; border-top: 1px solid #fbfbfb; display: flex; align-items: center; font-size: 14.700px; color: #222; }
  .s1 { margin-left: 17px; } .s2 { margin-left: 27px; } .s3 { margin-left: 28px; } .s4 { margin-left: 25px; } .s5 { margin-left: 105px; } .s6 { margin-left: 28px; } .s7 { margin-left: 25px; } strong { margin-left: 5px; }
  .right { margin-left: auto; display: flex; align-items: center; height: 100%; padding-right: 10px; }
  .v0 { margin-left: 5px; } .v1 { margin-left: 35px; } .v2 { margin-left: 20px; width: 60px; height: 100%; background: #dfdfdf; display: flex; align-items: center; justify-content: center; } .v3 { margin: 0 27px 0 19px; }
  .zoom { margin-left: 18px; }
</style>
